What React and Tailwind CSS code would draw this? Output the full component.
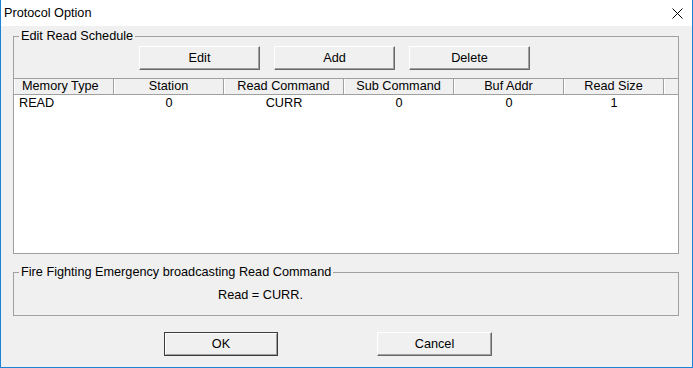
import React from "react";

const columns = [
  { name: "Memory Type", w: "w-[100px]", align: "text-left pl-[8px]" },
  { name: "Station", w: "w-[110px]", align: "text-center" },
  { name: "Read Command", w: "w-[120px]", align: "text-center" },
  { name: "Sub Command", w: "w-[110px]", align: "text-center" },
  { name: "Buf Addr", w: "w-[110px]", align: "text-center" },
  { name: "Read Size", w: "w-[100px]", align: "text-center" },
];

const rows = [["READ", "0", "CURR", "0", "0", "1"]];

function WinButton({ label, isDefault, className = "" }) {
  if (isDefault) {
    return (
      <button className={"h-[24px] border border-[#3c3c3c] bg-[#f0f0f0] p-0 " + className}>
        <div className="h-full w-full border-t border-l border-white border-b border-r border-b-[#a0a0a0] border-r-[#a0a0a0] flex items-center justify-center">
          {label}
        </div>
      </button>
    );
  }
  return (
    <button
      className={
        "h-[24px] bg-[#f0f0f0] border-t border-l border-white border-b border-r border-b-[#696969] border-r-[#696969] shadow-[inset_-1px_-1px_0_#a0a0a0] flex items-center justify-center " +
        className
      }
    >
      {label}
    </button>
  );
}

export default function App() {
  return (
    <div
      className="w-[693px] h-[368px] bg-[#f0f0f0] border-x border-b border-[#1883d7] flex flex-col text-[12.7px] leading-[14px] text-black"
      style={{ fontFamily: '"Liberation Sans", Arial, sans-serif' }}
    >
      {/* title bar */}
      <div className="h-[26px] bg-white flex items-center justify-between pl-[3px] pr-[9px]">
        <span>Protocol Option</span>
        <svg width="11" height="11" viewBox="0 0 11 11">
          <path d="M0.5 0.5 L10.5 10.5 M10.5 0.5 L0.5 10.5" stroke="#000" strokeWidth="1" fill="none" />
        </svg>
      </div>

      <div className="flex flex-col pl-[12px] pr-[13px]">
        {/* Edit Read Schedule group */}
        <div className="relative mt-[10px] h-[42px] border-t border-l border-r border-[#a0a0a0]">
          <span className="absolute left-[5px] -top-[8px] px-[2px] bg-[#f0f0f0]">Edit Read Schedule</span>
          <div className="flex gap-[14px] pl-[125px] pt-[9px]">
            <WinButton label="Edit" className="w-[121px]" />
            <WinButton label="Add" className="w-[121px]" />
            <WinButton label="Delete" className="w-[121px]" />
          </div>
        </div>

        {/* list */}
        <div className="h-[176px] border border-[#a0a0a0] bg-white">
          <div className="flex h-[16px] bg-[#f0f0f0] border-b border-[#a0a0a0]">
            {columns.map((c) => (
              <div
                key={c.name}
                className={`${c.w} ${c.align} leading-[15px] border-r border-[#a0a0a0] shadow-[inset_1px_0_0_#fff] shrink-0`}
              >
                {c.name}
              </div>
            ))}
            <div className="flex-1 shadow-[inset_1px_0_0_#fff]" />
          </div>
          {rows.map((r, i) => (
            <div key={i} className="flex h-[16px] leading-[16px]">
              {r.map((v, j) => (
                <div
                  key={j}
                  className={`${columns[j].w} shrink-0 ${j === 0 ? "pl-[5px] text-left" : "text-center"}`}
                >
                  {v}
                </div>
              ))}
            </div>
          ))}
        </div>

        {/* Fire fighting group */}
        <div className="relative mt-[18px] h-[44px] border border-[#a0a0a0]">
          <span className="absolute left-[5px] -top-[8px] px-[2px] bg-[#f0f0f0]">
            Fire Fighting Emergency broadcasting Read Command
          </span>
          <div className="pl-[204px] pt-[15px]">Read = CURR.</div>
        </div>

        {/* bottom buttons */}
        <div className="flex mt-[16px] pl-[151px] gap-[99px]">
          <WinButton label="OK" isDefault className="w-[114px]" />
          <WinButton label="Cancel" className="w-[115px]" />
        </div>
      </div>
    </div>
  );
}
